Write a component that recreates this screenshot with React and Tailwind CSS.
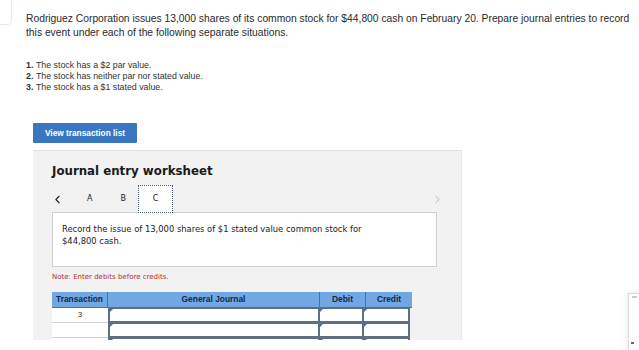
import { ChevronLeft, ChevronRight } from "lucide-react";

const sans = { fontFamily: '"Liberation Sans", Arial, sans-serif' };
const verdana = { fontFamily: '"DejaVu Sans", Verdana, sans-serif' };

function InputCell({ className = "" }) {
  return (
    <div className={`relative border-2 border-[#5f6f82] bg-white ${className}`}>
      <span className="absolute left-0 top-0 w-0 h-0 border-t-[3px] border-t-[#3d6fb0] border-r-[3px] border-r-transparent" />
    </div>
  );
}

function Row({ num }) {
  return (
    <div className="flex h-[15px]">
      <div className="w-[56px] border-b border-[#d4d4d4] bg-white flex items-center justify-center text-[8px] text-[#333]" style={sans}>
        {num}
      </div>
      <InputCell className="w-[212px] -mt-[1px]" />
      <InputCell className="w-[46px] -mt-[1px] -ml-[2px]" />
      <InputCell className="w-[48px] -mt-[1px] -ml-[2px]" />
    </div>
  );
}

export default function App() {
  return (
    <div className="relative w-[639px] h-[350px] bg-white overflow-hidden text-[#222]">
      {/* faint corner boxes */}
      <div className="absolute left-[-4px] top-[-4px] w-[16px] h-[29px] border border-[#eaeaea] rounded-sm" />
      <div className="absolute left-[628px] top-[293px] w-[20px] h-[60px] border border-[#dcdcdc] bg-white shadow-[0_0_6px_rgba(0,0,0,0.12)]">
        <div className="mt-[2px] ml-[3px] w-[5px] h-[2px] bg-[#ccc]" />
        <div className="absolute bottom-[8px] left-[2px] w-[3px] h-[2px] bg-[#d33]" />
      </div>

      <div className="h-[340px] overflow-hidden">
        <div className="pl-[26px] pt-[12px]">
          <p className="text-[10.3px] leading-[14px] text-[#2a2a2a] whitespace-nowrap" style={sans}>
            Rodriguez Corporation issues 13,000 shares of its common stock for $44,800 cash on February 20. Prepare journal entries to record
            <br />
            this event under each of the following separate situations.
          </p>
          <ol className="mt-[20px] text-[8.8px] leading-[11px] text-[#333]" style={sans}>
            <li className="flex"><span className="w-[10px] font-bold">1.</span>The stock has a $2 par value.</li>
            <li className="flex"><span className="w-[10px] font-bold">2.</span>The stock has neither par nor stated value.</li>
            <li className="flex"><span className="w-[10px] font-bold">3.</span>The stock has a $1 stated value.</li>
          </ol>
        </div>

        <div className="ml-[33px] mt-[25px]">
          <button className="h-[20px] w-[104px] bg-[#3a77c2] text-white text-[8.3px] font-bold rounded-[1px]" style={sans}>
            View transaction list
          </button>

          <div className="mt-[7px] w-[429px] h-[200px] bg-[#f2f2f2] border-t border-[#dedede] border-r border-r-[#e8e8e8] pl-[19px] pt-[13px]" style={verdana}>
            <h2 className="text-[11.8px] font-bold text-[#1a1a1a] leading-[14px]">Journal entry worksheet</h2>

            <div className="flex items-center mt-[7px] h-[28px] relative">
              <ChevronLeft size={13} strokeWidth={2} className="text-[#222] -ml-[1px]" />
              <span className="ml-[23px] text-[8px]">A</span>
              <span className="ml-[28px] text-[8px]">B</span>
              <div className="ml-[12px] w-[35px] h-[28px] border border-dotted border-[#4a5a72] bg-white flex items-center justify-center text-[8px] relative z-10">
                C
              </div>
              <ChevronRight size={13} strokeWidth={1.5} className="text-[#aaa] absolute left-[379px]" />
            </div>

            <div className="-mt-[1px] w-[385px] h-[55px] bg-white border border-[#cfcfcf] px-[9px] pt-[10px]">
              <p className="text-[8.4px] leading-[12px] text-[#222]">
                Record the issue of 13,000 shares of $1 stated value common stock for
                <br />
                $44,800 cash.
              </p>
            </div>

            <p className="mt-[5px] text-[7px] text-[#b03030]">Note: Enter debits before credits.</p>

            <div className="mt-[9px] w-[360px]" style={sans}>
              <div className="flex h-[16px] bg-[#71a7e2] text-[8.4px] font-bold text-[#14284a] border-b border-[#5f6f82]">
                <div className="w-[56px] flex items-center justify-center border-r border-[#4d6f9c]">Transaction</div>
                <div className="w-[212px] flex items-center justify-center border-r border-[#4d6f9c]">General Journal</div>
                <div className="w-[46px] flex items-center justify-center border-r border-[#4d6f9c]">Debit</div>
                <div className="w-[46px] flex items-center justify-center">Credit</div>
              </div>
              <Row num="3" />
              <Row num="" />
              <Row num="" />
            </div>
          </div>
        </div>
      </div>
    </div>
  );
}
